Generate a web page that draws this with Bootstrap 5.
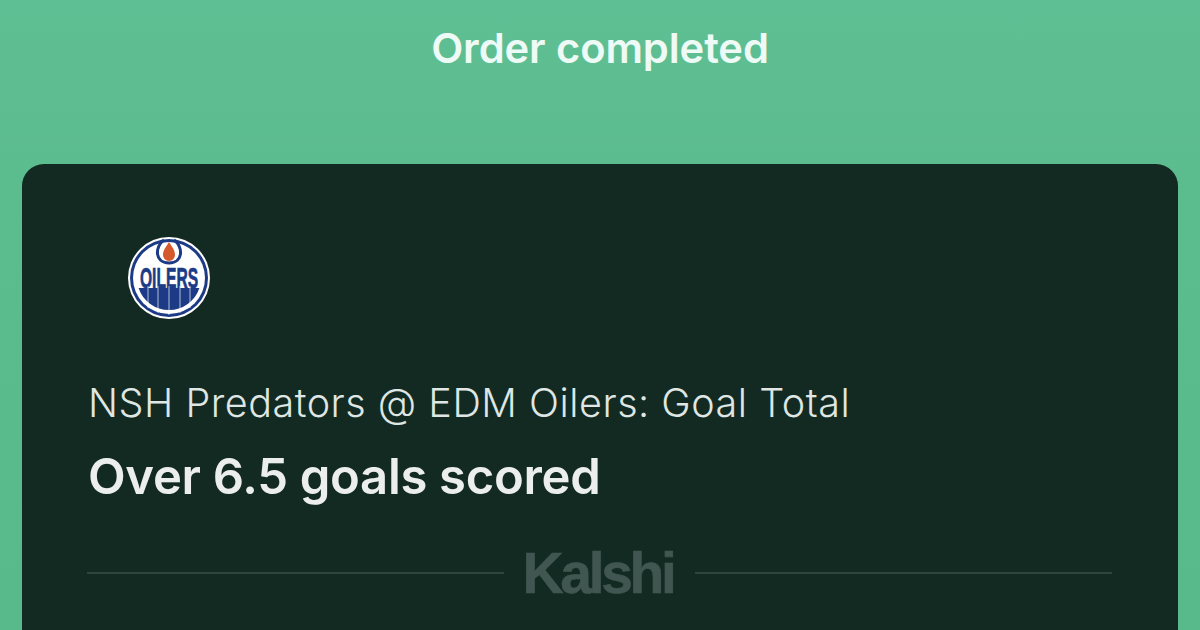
<!DOCTYPE html>
<html lang="en">
<head>
<meta charset="utf-8">
<title>Order completed</title>
<link href="https://cdn.jsdelivr.net/npm/bootstrap@5.3.0/dist/css/bootstrap.min.css" rel="stylesheet">
<style>
html,body{height:630px;overflow:hidden;margin:0}
body{background:linear-gradient(180deg,#5fbf94 0,#5bbc8e 30%,#58b98a 100%);font-family:Inter,"Liberation Sans",sans-serif}
.screen-top{height:164px;padding-top:24px}
.order-title{color:#eefaf5;font-size:41.700px;line-height:48px;font-weight:600;letter-spacing:-.1px}
.ticket{margin:0 22px;height:466px;overflow:hidden;background:#132a22;border-radius:22px 22px 0 0;padding:72px 66px 0}
.team-logo{display:block;margin-left:39px;width:84px;height:84px}
.market-name{color:#dfe6e3;font-size:39.500px;line-height:48px;font-weight:300;margin-top:59px;letter-spacing:.52px}
.market-pick{color:#eceeed;font-size:49px;line-height:56px;font-weight:600;margin-top:22px;letter-spacing:-.3px}
.brand-rule{height:2px;background:#2f4540;flex:1}
.brand-row{margin-top:43px;margin-left:-1px;gap:18px}
.brand-name{color:#415650;font-family:"Liberation Sans",sans-serif;font-size:57px;line-height:50px;font-weight:700;letter-spacing:-3.300px;-webkit-text-stroke:.6px #415650;padding-right:3px}
</style>
</head>
<body>
<div class="screen-top text-center"><div class="order-title">Order completed</div></div>
<div class="ticket">
  <svg class="team-logo" viewBox="0 0 84 84" role="img" aria-label="Edmonton Oilers logo">
    <circle cx="42" cy="42" r="41" fill="#fff"/>
    <circle cx="42" cy="42" r="39" fill="#1c3a85"/>
    <circle cx="42" cy="42" r="36" fill="#fff"/>
    <path d="M11.600 52H72.400A32 32 0 0 1 11.600 52Z" fill="#1c3a85"/>
    <path d="M37 4C28 10 27 27 42 27C57 27 56 10 47 4" fill="none" stroke="#1c3a85" stroke-width="3"/>
    <path d="M42 6C45 11 48 14 48 19A6 6 0 0 1 36 19C36 14 39 11 42 6Z" fill="#d5592c"/>
    <text transform="translate(42 52) scale(.92 1.700)" text-anchor="middle" font-family="Liberation Sans, sans-serif" font-weight="700" font-size="17" fill="#1c3a85" stroke="#1c3a85" stroke-width=".4">OILERS</text>
    <path d="M21 50V72M31 50V77M42 50V79M53 50V77M63 50V72" stroke="#fff" stroke-width=".9" fill="none" opacity=".75"/>
  </svg>
  <div class="market-name">NSH Predators @ EDM Oilers: Goal Total</div>
  <div class="market-pick">Over 6.5 goals scored</div>
  <div class="brand-row d-flex align-items-center">
    <div class="brand-rule"></div>
    <div class="brand-name">Kalshi</div>
    <div class="brand-rule"></div>
  </div>
</div>
</body>
</html>
